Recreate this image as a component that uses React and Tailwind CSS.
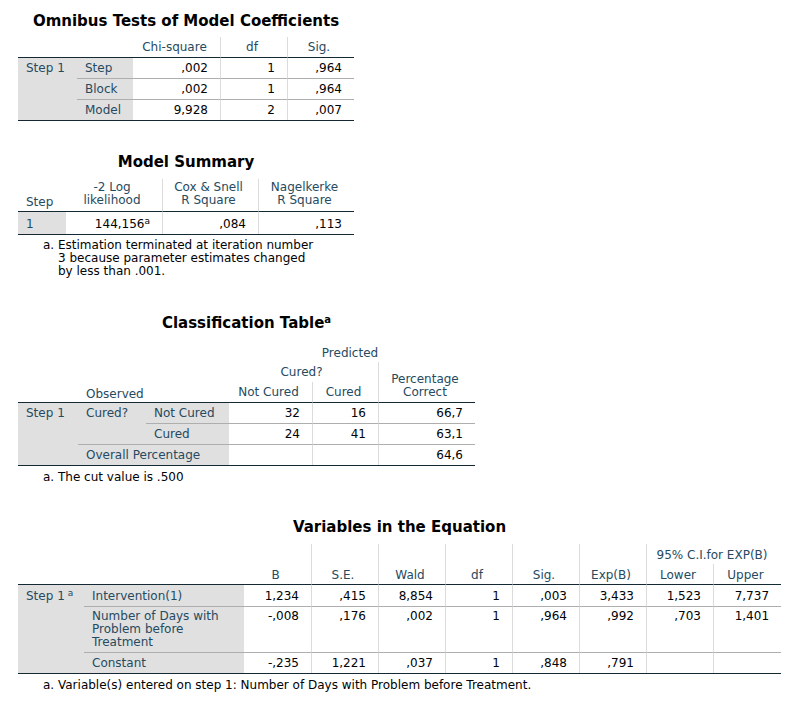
import React from "react";

const HEAD = "font-normal text-center align-bottom text-[#264a60] pl-1 pr-2";
const VL = "border-l border-l-[#dcdcdc]";
const LBL = "bg-[#e0e0e0] text-left align-top text-[#264a60] pl-2 pr-1";
const NUM = "text-right align-top pl-1 pr-3";
const TOP = "border-t border-t-[#152935]";
const SEP = "border-t border-t-[#aeaeae]";
const ROW = "pt-[4px] pb-[3px]";
const TABLE = "table-fixed border-separate border-spacing-0 border-b border-b-[#152935]";

const Title = ({ children }) => (
  <h2 className="text-center text-[15px] font-bold leading-[18px] text-black">
    {children}
  </h2>
);

const Note = ({ children, className = "mt-[4px]" }) => (
  <p className={`${className} pl-[40px] -indent-[15px]`}>{children}</p>
);

// Omnibus
const Omnibus = () => (
  <div className="w-[336px]">
    <Title>Omnibus Tests of Model Coefficients</Title>
    <table className={`mt-[7px] w-[336px] ${TABLE}`}>
      <colgroup>
        <col className="w-[59px]" />
        <col className="w-[56px]" />
        <col className="w-[87px]" />
        <col className="w-[67px]" />
        <col className="w-[67px]" />
      </colgroup>
      <thead>
        <tr>
          <th colSpan={2}></th>
          <th className={`${HEAD} ${ROW}`}>Chi-square</th>
          <th className={`${HEAD} ${ROW} ${VL}`}>df</th>
          <th className={`${HEAD} ${ROW} ${VL}`}>Sig.</th>
        </tr>
      </thead>
      <tbody>
        <tr>
          <td rowSpan={3} className={`${LBL} ${TOP} ${ROW}`}>Step 1</td>
          <td className={`${LBL} ${TOP} ${ROW}`}>Step</td>
          <td className={`${NUM} ${TOP} ${ROW}`}>,002</td>
          <td className={`${NUM} ${TOP} ${ROW} ${VL}`}>1</td>
          <td className={`${NUM} ${TOP} ${ROW} ${VL}`}>,964</td>
        </tr>
        <tr>
          <td className={`${LBL} ${SEP} ${ROW}`}>Block</td>
          <td className={`${NUM} ${SEP} ${ROW}`}>,002</td>
          <td className={`${NUM} ${SEP} ${ROW} ${VL}`}>1</td>
          <td className={`${NUM} ${SEP} ${ROW} ${VL}`}>,964</td>
        </tr>
        <tr>
          <td className={`${LBL} ${SEP} ${ROW}`}>Model</td>
          <td className={`${NUM} ${SEP} ${ROW}`}>9,928</td>
          <td className={`${NUM} ${SEP} ${ROW} ${VL}`}>2</td>
          <td className={`${NUM} ${SEP} ${ROW} ${VL}`}>,007</td>
        </tr>
      </tbody>
    </table>
  </div>
);

// Model summary
const ModelSummary = () => (
  <div className="mt-[32px] w-[336px]">
    <Title>Model Summary</Title>
    <table className={`mt-[8px] w-[336px] ${TABLE}`}>
      <colgroup>
        <col className="w-[48px]" />
        <col className="w-[96px]" />
        <col className="w-[96px]" />
        <col className="w-[96px]" />
      </colgroup>
      <thead>
        <tr>
          <th className="pl-2 pt-[2px] pb-[2px] text-left align-bottom font-normal text-[#264a60]">
            Step
          </th>
          <th className={`${HEAD} pt-[2px] pb-[4px]`}>
            -2 Log
            <br />
            likelihood
          </th>
          <th className={`${HEAD} pt-[2px] pb-[4px] ${VL}`}>
            Cox &amp; Snell
            <br />R Square
          </th>
          <th className={`${HEAD} pt-[2px] pb-[4px] ${VL}`}>
            Nagelkerke
            <br />R Square
          </th>
        </tr>
      </thead>
      <tbody>
        <tr>
          <td className={`${LBL} ${TOP} pt-[6px] pb-[3px]`}>1</td>
          <td className={`${NUM} ${TOP} pt-[6px] pb-[3px]`}>
            144,156<sup>a</sup>
          </td>
          <td className={`${NUM} ${TOP} pt-[6px] pb-[3px] ${VL}`}>,084</td>
          <td className={`${NUM} ${TOP} pt-[6px] pb-[3px] ${VL}`}>,113</td>
        </tr>
      </tbody>
    </table>
    <Note>
      a. Estimation terminated at iteration number
      <br />3 because parameter estimates changed
      <br />
      by less than .001.
    </Note>
  </div>
);

// Classification
const Classification = () => (
  <div className="mt-[36px] w-[457px]">
    <Title>
      Classification Table<sup className="text-[10px]">a</sup>
    </Title>
    <table className={`mt-[12px] w-[457px] ${TABLE}`}>
      <colgroup>
        <col className="w-[60px]" />
        <col className="w-[68px]" />
        <col className="w-[83px]" />
        <col className="w-[83px]" />
        <col className="w-[66px]" />
        <col className="w-[97px]" />
      </colgroup>
      <thead>
        <tr>
          <th colSpan={3} rowSpan={2}></th>
          <th colSpan={3} className={`${HEAD} pt-[3px] pb-[2px]`}>Predicted</th>
        </tr>
        <tr>
          <th colSpan={2} className={`${HEAD} ${ROW}`}>Cured?</th>
          <th rowSpan={2} className={`${HEAD} pt-[4px] pb-[3px] ${VL}`}>
            Percentage
            <br />
            Correct
          </th>
        </tr>
        <tr>
          <th></th>
          <th colSpan={2} className="pl-2 pt-[4px] pb-[1px] text-left align-bottom font-normal text-[#264a60]">
            Observed
          </th>
          <th className={`${HEAD} ${ROW}`}>Not Cured</th>
          <th className={`${HEAD} ${ROW} ${VL}`}>Cured</th>
        </tr>
      </thead>
      <tbody>
        <tr>
          <td rowSpan={3} className={`${LBL} ${TOP} ${ROW}`}>Step 1</td>
          <td rowSpan={2} className={`${LBL} ${TOP} ${ROW}`}>Cured?</td>
          <td className={`${LBL} ${TOP} ${ROW}`}>Not Cured</td>
          <td className={`${NUM} ${TOP} ${ROW}`}>32</td>
          <td className={`${NUM} ${TOP} ${ROW} ${VL}`}>16</td>
          <td className={`${NUM} ${TOP} ${ROW} ${VL}`}>66,7</td>
        </tr>
        <tr>
          <td className={`${LBL} ${SEP} ${ROW}`}>Cured</td>
          <td className={`${NUM} ${SEP} ${ROW}`}>24</td>
          <td className={`${NUM} ${SEP} ${ROW} ${VL}`}>41</td>
          <td className={`${NUM} ${SEP} ${ROW} ${VL}`}>63,1</td>
        </tr>
        <tr>
          <td colSpan={2} className={`${LBL} ${SEP} ${ROW}`}>Overall Percentage</td>
          <td className={`${NUM} ${SEP} ${ROW}`}></td>
          <td className={`${NUM} ${SEP} ${ROW} ${VL}`}></td>
          <td className={`${NUM} ${SEP} ${ROW} ${VL}`}>64,6</td>
        </tr>
      </tbody>
    </table>
    <Note className="mt-[5px]">a. The cut value is .500</Note>
  </div>
);

const vars = [
  {
    label: "Intervention(1)",
    vals: ["1,234", ",415", "8,854", "1", ",003", "3,433", "1,523", "7,737"],
  },
  {
    label: (
      <>
        Number of Days with
        <br />
        Problem before
        <br />
        Treatment
      </>
    ),
    vals: ["-,008", ",176", ",002", "1", ",964", ",992", ",703", "1,401"],
  },
  {
    label: "Constant",
    vals: ["-,235", "1,221", ",037", "1", ",848", ",791", "", ""],
  },
];

const pads = ["pt-[5px] pb-[3px]", "pt-[3px] pb-[3px]", "pt-[4px] pb-[3px]"];

// Variables in the equation
const Variables = () => (
  <div className="mt-[34px] w-[763px]">
    <Title>Variables in the Equation</Title>
    <table className={`mt-[8px] w-[763px] ${TABLE}`}>
      <colgroup>
        <col className="w-[66px]" />
        <col className="w-[160px]" />
        <col className="w-[67px]" />
        <col className="w-[67px]" />
        <col className="w-[67px]" />
        <col className="w-[67px]" />
        <col className="w-[67px]" />
        <col className="w-[67px]" />
        <col className="w-[67px]" />
        <col className="w-[68px]" />
      </colgroup>
      <thead>
        <tr>
          <th colSpan={2} rowSpan={2}></th>
          <th rowSpan={2} className={`${HEAD} pb-[2px]`}>B</th>
          <th rowSpan={2} className={`${HEAD} pb-[2px] ${VL}`}>S.E.</th>
          <th rowSpan={2} className={`${HEAD} pb-[2px] ${VL}`}>Wald</th>
          <th rowSpan={2} className={`${HEAD} pb-[2px] ${VL}`}>df</th>
          <th rowSpan={2} className={`${HEAD} pb-[2px] ${VL}`}>Sig.</th>
          <th rowSpan={2} className={`${HEAD} pb-[2px] ${VL}`}>Exp(B)</th>
          <th colSpan={2} className={`${HEAD} pt-[5px] pb-[2px] ${VL}`}>
            95% C.I.for EXP(B)
          </th>
        </tr>
        <tr>
          <th className={`${HEAD} pt-[5px] pb-[2px] ${VL}`}>Lower</th>
          <th className={`${HEAD} pt-[5px] pb-[2px] ${VL}`}>Upper</th>
        </tr>
      </thead>
      <tbody>
        {vars.map((r, i) => (
          <tr key={i}>
            {i === 0 && (
              <td rowSpan={3} className={`${LBL} ${TOP} ${pads[0]}`}>
                Step 1<sup className="ml-[3px]">a</sup>
              </td>
            )}
            <td className={`${LBL} ${i === 0 ? TOP : SEP} ${pads[i]}`}>{r.label}</td>
            {r.vals.map((v, j) => (
              <td
                key={j}
                className={`${NUM} ${i === 0 ? TOP : SEP} ${pads[i]} ${j > 0 ? VL : ""}`}
              >
                {v}
              </td>
            ))}
          </tr>
        ))}
      </tbody>
    </table>
    <Note className="mt-[5px]">
      a. Variable(s) entered on step 1: Number of Days with Problem before Treatment.
    </Note>
  </div>
);

const App = () => {
  return (
    <div className="min-h-[708px] bg-white pl-[18px] pt-[12px] font-['DejaVu_Sans',sans-serif] text-[12px] leading-[13px] text-[#010205]">
      <Omnibus />
      <ModelSummary />
      <Classification />
      <Variables />
    </div>
  );
};

export default App;
